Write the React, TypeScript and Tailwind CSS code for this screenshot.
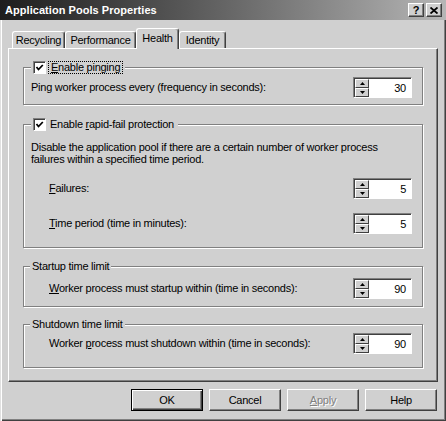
import React from "react";

const U = ({ children }: { children: React.ReactNode }) => (
  <span className="underline underline-offset-[1px] decoration-[1px]">{children}</span>
);

function Arrow({ up }: { up?: boolean }) {
  return (
    <svg width="5" height="3" viewBox="0 0 5 3" className="block">
      {up ? <path d="M2.5 0 L5 3 L0 3 Z" fill="#000" /> : <path d="M0 0 L5 0 L2.5 3 Z" fill="#000" />}
    </svg>
  );
}

function SpinBtn({ up }: { up?: boolean }) {
  return (
    <div className="flex-1 flex items-center justify-center bg-[#d0d0d0] border border-t-white border-l-white border-r-[#404040] border-b-[#404040]">
      <Arrow up={up} />
    </div>
  );
}

function Spin({ v }: { v: string }) {
  return (
    <div className="flex w-[59px] h-[21px] bg-white border border-t-[#808080] border-l-[#808080] border-r-white border-b-white shadow-[inset_1px_1px_0_#404040] pt-[1px] pl-[1px]">
      <div className="flex flex-col w-[14px] h-[18px]">
        <SpinBtn up />
        <SpinBtn />
      </div>
      <div className="flex-1 text-right pr-[5px] leading-[18px]">{v}</div>
    </div>
  );
}

function Check() {
  return (
    <div className="w-[13px] h-[13px] shrink-0 bg-white border border-t-[#808080] border-l-[#808080] border-r-white border-b-white shadow-[inset_1px_1px_0_#404040] flex items-center justify-center">
      <svg width="9" height="9" viewBox="0 0 9 9" className="block">
        <path d="M1.5 4 L3.5 6.5 L7.8 2" stroke="#000" strokeWidth="1.8" fill="none" />
      </svg>
    </div>
  );
}

function Row({ label, v }: { label: React.ReactNode; v: string }) {
  return (
    <div className="flex items-center h-[21px] pl-[25px] pr-[10px]">
      <span className="flex-1">{label}</span>
      <Spin v={v} />
    </div>
  );
}

const groupCls =
  "border border-[#808080] shadow-[1px_1px_0_#fff,inset_1px_1px_0_#fff]";

const btnNormal =
  "w-[72px] h-[22px] flex items-center justify-center bg-[#d0d0d0] border border-t-white border-l-white border-r-[#404040] border-b-[#404040] shadow-[inset_-1px_-1px_0_#808080]";

export default function App() {
  return (
    <div className="w-[446px] h-[421px] bg-[#d0d0d0] text-black text-[11px] leading-[13px] tracking-[-0.25px] font-['Liberation_Sans',Arial,sans-serif] shadow-[inset_1px_0_0_#e0e0e0,inset_2px_0_0_#fff,inset_-1px_-1px_0_#404040,inset_-2px_-2px_0_#808080] overflow-hidden flex flex-col">
      {/* Title bar */}
      <div className="h-[20px] flex items-center bg-linear-to-r from-[#1e1e1e] to-[#b6b6b6] pl-[5px] pr-[4px]">
        <span className="flex-1 text-white font-bold text-[11px] tracking-[0.05px]">Application Pools Properties</span>
        <div className="flex gap-[2px]">
          <div className="w-[16px] h-[14px] flex items-center justify-center bg-[#d0d0d0] border border-t-white border-l-white border-r-[#404040] border-b-[#404040] shadow-[inset_-1px_-1px_0_#808080] font-bold text-[11px] leading-[11px]">
            ?
          </div>
          <div className="w-[16px] h-[14px] flex items-center justify-center bg-[#d0d0d0] border border-t-white border-l-white border-r-[#404040] border-b-[#404040] shadow-[inset_-1px_-1px_0_#808080]">
            <svg width="8" height="7" viewBox="0 0 8 7" className="block">
              <path d="M0.5 0.5 L7.5 6.5 M7.5 0.5 L0.5 6.5" stroke="#000" strokeWidth="1.8" />
            </svg>
          </div>
        </div>
      </div>

      {/* Tabs */}
      <div className="relative z-10 flex items-end ml-[12px] mt-[8px] h-[20px]">
        <div className="w-[53px] h-[17px] flex items-center justify-center border-t border-l border-r border-t-white border-l-white border-r-[#404040] shadow-[inset_-1px_0_0_#808080] rounded-t-[3px]">
          Recycling
        </div>
        <div className="w-[71px] h-[17px] flex items-center justify-center border-t border-l border-r border-t-white border-l-white border-r-[#404040] shadow-[inset_-1px_0_0_#808080] rounded-t-[3px]">
          Performance
        </div>
        <div className="w-[43px] h-[21px] -mb-[1px] flex items-start justify-center pt-[2px] leading-[14px] bg-[#d0d0d0] border-t border-l border-r border-t-white border-l-white border-r-[#404040] shadow-[inset_-1px_0_0_#808080] rounded-t-[3px]">
          Health
        </div>
        <div className="w-[47px] h-[17px] flex items-center justify-center border-t border-l border-r border-t-white border-l-white border-r-[#404040] shadow-[inset_-1px_0_0_#808080] rounded-t-[3px]">
          Identity
        </div>
      </div>

      {/* Panel */}
      <div className="ml-[8px] w-[430px] h-[334px] border border-t-white border-l-white border-r-[#404040] border-b-[#404040] shadow-[inset_-1px_-1px_0_#808080] px-[14px] pt-[12px] flex flex-col">
        {/* Group 1 */}
        <fieldset className={groupCls}>
          <legend className="ml-[7px] px-[2px] bg-[#d0d0d0]">
            <span className="flex items-center h-[13px]">
              <Check />
              <span className="ml-[2px] px-[2px] border border-dotted border-black leading-[11px]">
                <U>E</U>nable pinging
              </span>
            </span>
          </legend>
          <div className="pt-[3px] pb-[6px]">
            <div className="flex items-center h-[21px] pl-[7px] pr-[10px]">
              <span className="flex-1">
                Pin<U>g</U> worker process every (frequency in seconds):
              </span>
              <Spin v="30" />
            </div>
          </div>
        </fieldset>

        {/* Group 2 */}
        <fieldset className={`${groupCls} mt-[13px]`}>
          <legend className="ml-[7px] px-[2px] bg-[#d0d0d0]">
            <span className="flex items-center h-[13px]">
              <Check />
              <span className="ml-[4px] pr-[2px]">
                Enable <U>r</U>apid-fail protection
              </span>
            </span>
          </legend>
          <div className="pt-[10px] pb-[13px]">
            <div className="pl-[7px] leading-[12px]">
              Disable the application pool if there are a certain number of worker process
              <br />
              failures within a specified time period.
            </div>
            <div className="mt-[13px]">
              <Row
                label={
                  <>
                    <U>F</U>ailures:
                  </>
                }
                v="5"
              />
            </div>
            <div className="mt-[14px]">
              <Row
                label={
                  <>
                    <U>T</U>ime period (time in minutes):
                  </>
                }
                v="5"
              />
            </div>
          </div>
        </fieldset>

        {/* Group 3 */}
        <fieldset className={`${groupCls} mt-[12px]`}>
          <legend className="ml-[6px] px-[2px] bg-[#d0d0d0]">Startup time limit</legend>
          <div className="pt-[5px] pb-[7px]">
            <Row
              label={
                <>
                  <U>W</U>orker process must startup within (time in seconds):
                </>
              }
              v="90"
            />
          </div>
        </fieldset>

        {/* Group 4 */}
        <fieldset className={`${groupCls} mt-[11px]`}>
          <legend className="ml-[6px] px-[2px] bg-[#d0d0d0]">Shutdown time limit</legend>
          <div className="pt-[2px] pb-[13px]">
            <Row
              label={
                <>
                  Worker <U>p</U>rocess must shutdown within (time in seconds):
                </>
              }
              v="90"
            />
          </div>
        </fieldset>
      </div>

      {/* Buttons */}
      <div className="flex justify-end gap-[6px] mt-[7px] pr-[9px]">
        <div className="w-[72px] h-[22px] flex items-center justify-center bg-[#d0d0d0] border border-black shadow-[inset_1px_1px_0_#fff,inset_-1px_-1px_0_#404040,inset_-2px_-2px_0_#808080]">
          OK
        </div>
        <div className={btnNormal}>Cancel</div>
        <div className={`${btnNormal} text-[#808080] [text-shadow:1px_1px_0_#fff]`}>
          <U>A</U>pply
        </div>
        <div className={btnNormal}>Help</div>
      </div>
    </div>
  );
}
